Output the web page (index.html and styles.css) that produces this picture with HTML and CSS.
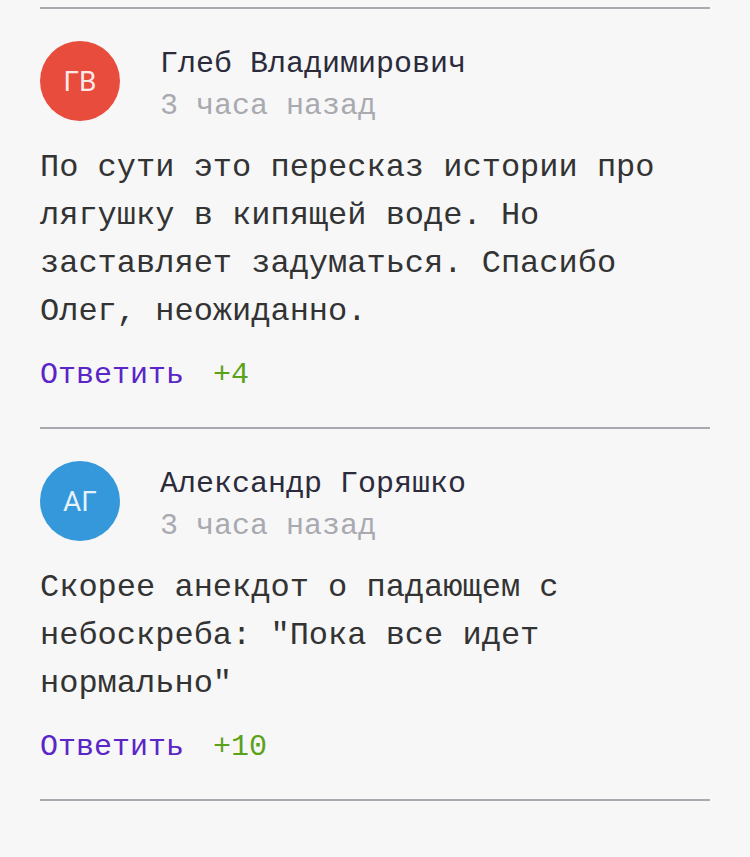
FILE: index.html
```html
<!DOCTYPE html>
<html lang="ru">
<head>
<meta charset="utf-8">
<link rel="stylesheet" href="styles.css">
</head>
<body>
<div class="comments">
  <div class="comment">
    <div class="head">
      <div class="avatar red"><span>ГВ</span></div>
      <div class="meta">
        <div class="name">Глеб Владимирович</div>
        <div class="time">3 часа назад</div>
      </div>
    </div>
    <p class="text">По сути это пересказ истории про лягушку в кипящей воде. Но заставляет задуматься. Спасибо Олег, неожиданно.</p>
    <div class="actions">
      <span class="reply">Ответить</span>
      <span class="score">+4</span>
    </div>
  </div>
  <div class="comment">
    <div class="head">
      <div class="avatar blue"><span>АГ</span></div>
      <div class="meta">
        <div class="name">Александр Горяшко</div>
        <div class="time">3 часа назад</div>
      </div>
    </div>
    <p class="text">Скорее анекдот о падающем с небоскреба: "Пока все идет нормально"</p>
    <div class="actions">
      <span class="reply">Ответить</span>
      <span class="score">+10</span>
    </div>
  </div>
</div>
</body>
</html>
```
FILE: styles.css
```css
html, body {
  margin: 0;
  background: #f7f7f8;
}
body {
  padding: 7px 40px 0;
  font-family: "Liberation Mono", "DejaVu Sans Mono", monospace;
}
.comments {
  border-bottom: 2px solid #a9a9b0;
}
.comment {
  border-top: 2px solid #a9a9b0;
  padding: 32px 0 28px;
}
.head {
  display: flex;
  align-items: flex-start;
  gap: 40px;
}
.avatar {
  width: 80px;
  height: 80px;
  border-radius: 50%;
  display: flex;
  align-items: center;
  justify-content: center;
  flex: none;
}
.avatar span {
  font-family: Roboto, "Liberation Sans", sans-serif;
  font-size: 28px;
  color: rgba(255, 255, 255, 0.88);
}
.red { background: #e74c3c; }
.blue { background: #3498db; }
.meta {
  padding-top: 2px;
  font-size: 30px;
  line-height: 42px;
}
.name { color: #2b2b3b; }
.time { color: #a9a9b0; }
.text {
  margin: 17px 0 0;
  font-size: 32px;
  line-height: 48px;
  color: #333333;
}
.actions {
  margin-top: 15px;
  display: flex;
  gap: 29px;
  font-size: 30px;
  line-height: 48px;
}
.reply { color: #5a26c6; }
.score { color: #5ca11a; }
```
